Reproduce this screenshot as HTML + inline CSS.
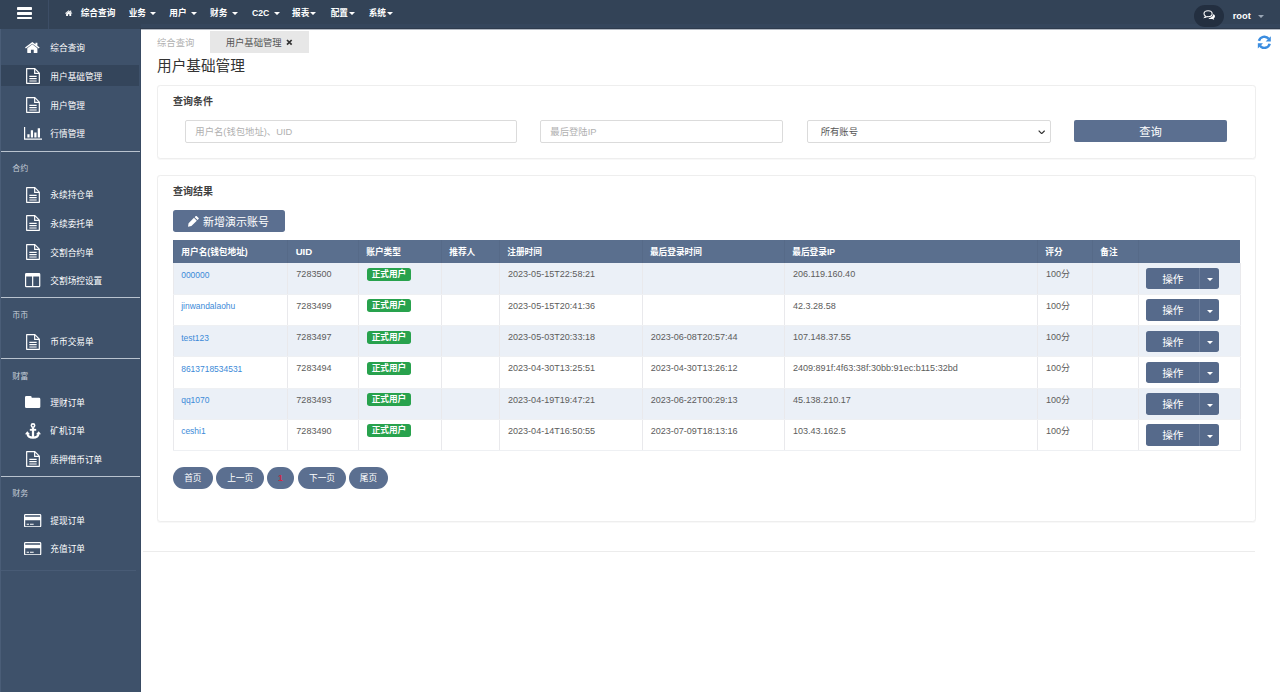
<!DOCTYPE html>
<html lang="zh-CN">
<head>
<meta charset="utf-8">
<title>用户基础管理</title>
<style>
*{box-sizing:border-box;}
html,body{margin:0;padding:0;background:#fff;overflow:hidden;}
body{width:1280px;height:692px;font-family:"Liberation Sans","Noto Sans CJK SC",sans-serif;}
#app{zoom:0.666667;width:1920px;height:1038px;position:relative;font-size:14px;color:#333;overflow:hidden;background:#fff;}
svg{display:block;}
#nav{position:absolute;left:0;top:0;width:1920px;height:43px;background:#334357;color:#fff;z-index:5;}
#edgeb{position:absolute;left:211px;top:36.500px;width:1709px;height:5.500px;background:#35465c;}
#edgeh{position:absolute;left:209.500px;top:42px;width:1711px;height:2.200px;background:#2e3b4d;z-index:6;}
#edgeh2{position:absolute;left:211.500px;top:43.500px;width:1709px;height:1.500px;background:#b4bac3;z-index:6;}
#edgev{position:absolute;left:209.500px;top:44px;width:1.800px;height:995px;background:#394b63;z-index:6;}
#burger{position:absolute;left:0;top:0;width:73px;height:43px;border-right:1px solid #3d4e66;}
#burger i{position:absolute;left:25px;width:23px;height:4px;background:#fff;border-radius:1px;}
.nitem{position:absolute;top:0;height:44px;line-height:39px;font-size:13px;font-weight:bold;white-space:nowrap;color:#fff;}
.caret{display:inline-block;vertical-align:middle;margin-left:6.500px;position:relative;top:-0.700px;}
.caret.t{margin-left:1.500px;}
.caret.r{margin-left:10.500px;width:9px;top:-0.500px;}
#side{position:absolute;left:0;top:43px;padding-top:1px;width:211px;height:995px;background:#3e516a;color:#fff;border-left:2px solid #4a5d77;}
.sitem{position:absolute;left:0;width:206.500px;height:32px;line-height:36.500px;font-size:13px;color:#fff;padding-left:74px;white-space:nowrap;}
.sitem.act{background:#34455b;}
.sitem svg{position:absolute;}
.slabel{position:absolute;left:17px;font-size:12px;color:#c6ced9;height:20px;line-height:20px;}
.ssep{position:absolute;left:0;width:209.500px;height:1.500px;background:#b9c3cf;}
#main{position:absolute;left:212px;top:44px;width:1708px;height:994px;background:#fff;}
.abs{position:absolute;white-space:nowrap;}
.panel{position:absolute;border:1px solid #eeeeee;border-radius:5px;background:#fff;box-shadow:0 1px 1px rgba(0,0,0,.03);}
.ptitle{position:absolute;font-size:15px;font-weight:bold;color:#404040;line-height:20px;}
.inp{position:absolute;height:34.800px;border:1px solid #dbdbdb;border-radius:3px;background:#fff;font-size:14px;line-height:34.500px;padding-left:14px;color:#b0b0b0;white-space:nowrap;}
.btn{position:absolute;background:#5b6f90;color:#fff;border-radius:4px;text-align:center;white-space:nowrap;}
table{border-collapse:collapse;position:absolute;table-layout:fixed;}
th{background:#5a6f8e;color:#fff;font-size:13px;font-weight:bold;text-align:left;padding:3.500px 0 0 11px;height:34.500px;line-height:31px;white-space:nowrap;border-left:1px solid #566a88;}
td{border-left:1px solid #e9e9ec;border-right:1px solid #e9e9ec;border-bottom:1px solid #eef0f3;vertical-align:top;padding:7px 0 0 12px;height:46.900px;font-size:13.600px;line-height:20px;color:#5c5c5c;white-space:nowrap;overflow:hidden;}
td div{height:20px;position:relative;top:0.700px;}
td div.l{top:1.500px;left:-1.200px;}
tr.odd td{background:#ebf0f7;}
td a{color:#3c8ad8;font-size:12.700px;text-decoration:none;}
.badge{display:block;width:66px;background:#28a24d;color:#fff;font-size:13px;font-weight:bold;height:19.500px;line-height:18.500px;text-align:center;border-radius:4px;margin-top:0px;}
.op{display:block;position:relative;width:109px;height:32px;margin-top:0px;margin-left:-1px;background:#566a8b;border-radius:4px;}
.op .a{position:absolute;left:0;top:0;width:81px;height:32px;color:#fff;font-size:16px;line-height:35px;text-align:center;border-right:1.500px solid #6b7d9b;}
.op .b{position:absolute;left:82px;top:0;width:27px;height:32px;}
.op .b svg{position:absolute;left:9px;top:15.500px;}
.pill{position:absolute;top:656.500px;height:33px;line-height:35px;border-radius:17px;background:#5b6f90;color:#fff;font-size:13px;text-align:center;}
</style>
</head>
<body>
<div id="app">
<div id="nav">
<div id="edgeb"></div><div id="burger"><i style="top:11px"></i><i style="top:18px"></i><i style="top:25px"></i></div>
<div class="nitem" style="left:98px"><svg width="11" height="10" viewBox="0 0 26 22" style="display:inline-block;vertical-align:-1px;margin-right:12px"><path fill="#fff" d="M13 4.500 4 12v8.500h6.500v-6h5v6H22V12zM13 0 0 10.800l1.600 1.900L13 3.200l11.400 9.500 1.600-1.900L22 7.500V1h-3.500v3.600z"/></svg>综合查询</div>
<div class="nitem" style="left:193px">业务<svg class="caret" width="9" height="5" viewBox="0 0 8 5" preserveAspectRatio="none"><path d="M0 0h8L4 4.600z" fill="#fff"/></svg></div>
<div class="nitem" style="left:254px">用户<svg class="caret" width="9" height="5" viewBox="0 0 8 5" preserveAspectRatio="none"><path d="M0 0h8L4 4.600z" fill="#fff"/></svg></div>
<div class="nitem" style="left:315px">财务<svg class="caret" width="9" height="5" viewBox="0 0 8 5" preserveAspectRatio="none"><path d="M0 0h8L4 4.600z" fill="#fff"/></svg></div>
<div class="nitem" style="left:378px">C2C<svg class="caret" width="9" height="5" viewBox="0 0 8 5" preserveAspectRatio="none"><path d="M0 0h8L4 4.600z" fill="#fff"/></svg></div>
<div class="nitem" style="left:438px">报表<svg class="caret t" width="9" height="5" viewBox="0 0 8 5" preserveAspectRatio="none"><path d="M0 0h8L4 4.600z" fill="#fff"/></svg></div>
<div class="nitem" style="left:496px">配置<svg class="caret t" width="9" height="5" viewBox="0 0 8 5" preserveAspectRatio="none"><path d="M0 0h8L4 4.600z" fill="#fff"/></svg></div>
<div class="nitem" style="left:553px">系统<svg class="caret t" width="9" height="5" viewBox="0 0 8 5" preserveAspectRatio="none"><path d="M0 0h8L4 4.600z" fill="#fff"/></svg></div>
<div class="abs" style="left:1791px;top:7px;width:45px;height:34px;border-radius:17px;background:#232f40"><svg width="19" height="16" viewBox="0 0 20 17" style="position:absolute;left:13px;top:8.500px"><path d="M8 1.200c3.600 0 6.500 2.100 6.500 4.800s-2.900 4.800-6.500 4.800c-.700 0-1.400-.1-2-.2-1 .8-2.300 1.300-3.500 1.400.7-.7 1.100-1.500 1.200-2.400C2.300 8.700 1.500 7.400 1.500 6c0-2.700 2.900-4.800 6.500-4.800z" fill="none" stroke="#fff" stroke-width="1.700"/><path d="M16.300 6.500c1.700.8 2.700 2.100 2.700 3.600 0 1.300-.800 2.500-2.100 3.300.1.800.5 1.600 1.100 2.200-1.200-.1-2.300-.6-3.200-1.300-.6.1-1.200.2-1.800.2-1.800 0-3.400-.6-4.500-1.500 4.500-.2 8-2.900 7.800-6.500z" fill="#fff"/></svg></div>
<div class="nitem" style="left:1849px;font-size:14px;line-height:50px">root<svg class="caret r" width="9" height="5" viewBox="0 0 8 5" preserveAspectRatio="none"><path d="M0 0h8L4 4.600z" fill="#9aa6b5"/></svg></div>
</div>
<div id="edgeh"></div><div id="edgeh2"></div><div id="edgev"></div>
<div id="side">
<div class="sitem" style="top:11.5px"><svg style="left:36.5px;top:8.5px" width="22" height="17" viewBox="0 0 26 22" preserveAspectRatio="none"><path fill="#fff" d="M13 4.500 4 12v8.500q0 1 1 1h5.500v-6.500h5v6.500H21q1 0 1-1V12zM13 0 0 10.800l1.600 1.900L13 3.200l11.400 9.500 1.600-1.900L22 7.500V1.500h-3.500v3.100z"/></svg>综合查询</div>
<div class="sitem act" style="top:54.5px"><svg style="left:37.5px;top:5.0px" width="21" height="24" viewBox="0 0 21 24"><path d="M1 1h12.300l6.700 6.700V23H1z" fill="none" stroke="#fff" stroke-width="1.800" stroke-linejoin="round"/><path d="M13 1.500V8h6.500" fill="none" stroke="#fff" stroke-width="1.800"/><path d="M5 12.500h11M5 16h11M5 19.500h11" stroke="#fff" stroke-width="1.700"/></svg>用户基础管理</div>
<div class="sitem" style="top:97.5px"><svg style="left:37.5px;top:5.0px" width="21" height="24" viewBox="0 0 21 24"><path d="M1 1h12.300l6.700 6.700V23H1z" fill="none" stroke="#fff" stroke-width="1.800" stroke-linejoin="round"/><path d="M13 1.500V8h6.500" fill="none" stroke="#fff" stroke-width="1.800"/><path d="M5 12.500h11M5 16h11M5 19.500h11" stroke="#fff" stroke-width="1.700"/></svg>用户管理</div>
<div class="sitem" style="top:140.5px"><svg style="left:34.5px;top:7.0px" width="27" height="19" viewBox="0 0 27 21" preserveAspectRatio="none"><path fill="#fff" d="M0 0h1.800v19.200H27V21H0zM5 12h3.400v5.500H5zM10.200 5.500h3.400v12h-3.400zM15.400 9h3.400v8.500h-3.400zM20.600 2h3.400v15.500h-3.400z"/></svg>行情管理</div>
<div class="ssep" style="top:182.8px"></div>
<div class="slabel" style="top:200.0px">合约</div>
<div class="sitem" style="top:232.0px"><svg style="left:37.5px;top:5.0px" width="21" height="24" viewBox="0 0 21 24"><path d="M1 1h12.300l6.700 6.700V23H1z" fill="none" stroke="#fff" stroke-width="1.800" stroke-linejoin="round"/><path d="M13 1.500V8h6.500" fill="none" stroke="#fff" stroke-width="1.800"/><path d="M5 12.500h11M5 16h11M5 19.500h11" stroke="#fff" stroke-width="1.700"/></svg>永续持仓单</div>
<div class="sitem" style="top:275.0px"><svg style="left:37.5px;top:5.0px" width="21" height="24" viewBox="0 0 21 24"><path d="M1 1h12.300l6.700 6.700V23H1z" fill="none" stroke="#fff" stroke-width="1.800" stroke-linejoin="round"/><path d="M13 1.500V8h6.500" fill="none" stroke="#fff" stroke-width="1.800"/><path d="M5 12.500h11M5 16h11M5 19.500h11" stroke="#fff" stroke-width="1.700"/></svg>永续委托单</div>
<div class="sitem" style="top:318.0px"><svg style="left:37.5px;top:5.0px" width="21" height="24" viewBox="0 0 21 24"><path d="M1 1h12.300l6.700 6.700V23H1z" fill="none" stroke="#fff" stroke-width="1.800" stroke-linejoin="round"/><path d="M13 1.500V8h6.500" fill="none" stroke="#fff" stroke-width="1.800"/><path d="M5 12.500h11M5 16h11M5 19.500h11" stroke="#fff" stroke-width="1.700"/></svg>交割合约单</div>
<div class="sitem" style="top:361.0px"><svg style="left:36.5px;top:5.8px" width="23" height="21.500" viewBox="0 0 23 20" preserveAspectRatio="none"><path fill="#fff" fill-rule="evenodd" d="M2 0h19q2 0 2 2v16q0 2-2 2H2q-2 0-2-2V2q0-2 2-2zM1.800 5v13q0 .3.300.3h8.500V5zM12.400 5v13.300h8.500q.3 0 .3-.3V5z"/></svg>交割场控设置</div>
<div class="ssep" style="top:402.4px"></div>
<div class="slabel" style="top:420.5px">币币</div>
<div class="sitem" style="top:452.5px"><svg style="left:37.5px;top:5.0px" width="21" height="24" viewBox="0 0 21 24"><path d="M1 1h12.300l6.700 6.700V23H1z" fill="none" stroke="#fff" stroke-width="1.800" stroke-linejoin="round"/><path d="M13 1.500V8h6.500" fill="none" stroke="#fff" stroke-width="1.800"/><path d="M5 12.500h11M5 16h11M5 19.500h11" stroke="#fff" stroke-width="1.700"/></svg>币币交易单</div>
<div class="ssep" style="top:493.9px"></div>
<div class="slabel" style="top:512.0px">财富</div>
<div class="sitem" style="top:543.0px"><svg style="left:36.5px;top:8.0px" width="23" height="18" viewBox="0 0 23 18"><path fill="#fff" d="M2 0h6q2 0 2 2v.800h11q2 0 2 2V16q0 2-2 2H2q-2 0-2-2V2q0-2 2-2z"/></svg>理财订单</div>
<div class="sitem" style="top:586.0px"><svg style="left:36.0px;top:5.0px" width="24" height="24" viewBox="0 0 24 24"><g fill="none" stroke="#fff"><circle cx="12" cy="3.800" r="2.500" stroke-width="2.400"/><path d="M12 6.500V21.500" stroke-width="3.400"/><path d="M7.200 10.200h9.600" stroke-width="2.800"/><path d="M3.600 15.500c.4 4.200 4 6.400 8.400 6.400s8-2.200 8.400-6.400" stroke-width="3.200"/></g><path fill="#fff" d="M-.2 17 3.400 12.200 7.600 17zM16.400 17l4.200-4.800 3.600 4.800z"/></svg>矿机订单</div>
<div class="sitem" style="top:629.0px"><svg style="left:37.5px;top:5.0px" width="21" height="24" viewBox="0 0 21 24"><path d="M1 1h12.300l6.700 6.700V23H1z" fill="none" stroke="#fff" stroke-width="1.800" stroke-linejoin="round"/><path d="M13 1.500V8h6.500" fill="none" stroke="#fff" stroke-width="1.800"/><path d="M5 12.500h11M5 16h11M5 19.500h11" stroke="#fff" stroke-width="1.700"/></svg>质押借币订单</div>
<div class="ssep" style="top:670.9px"></div>
<div class="slabel" style="top:688.0px">财务</div>
<div class="sitem" style="top:721.0px"><svg style="left:35.0px;top:7.0px" width="26" height="20" viewBox="0 0 26 20"><path fill="#fff" fill-rule="evenodd" d="M2.200 0h21.600q2.200 0 2.200 2.200v15.600q0 2.200-2.200 2.200H2.200Q0 20 0 17.800V2.200Q0 0 2.200 0zM1.800 2.200V4h22.400V2.200q0-.4-.4-.4H2.200q-.4 0-.4.400zM1.800 9.500v8.300q0 .4.400.4h21.600q.4 0 .4-.4V9.500zM4 14.500h3.500v1.800H4zM9 14.500h5.500v1.800H9z"/></svg>提现订单</div>
<div class="sitem" style="top:763.0px"><svg style="left:35.0px;top:7.0px" width="26" height="20" viewBox="0 0 26 20"><path fill="#fff" fill-rule="evenodd" d="M2.200 0h21.600q2.200 0 2.200 2.200v15.600q0 2.200-2.200 2.200H2.200Q0 20 0 17.800V2.200Q0 0 2.200 0zM1.800 2.200V4h22.400V2.200q0-.4-.4-.4H2.200q-.4 0-.4.400zM1.800 9.500v8.300q0 .4.400.4h21.600q.4 0 .4-.4V9.500zM4 14.500h3.500v1.800H4zM9 14.500h5.500v1.800H9z"/></svg>充值订单</div>
<div class="abs" style="left:0;top:812.5px;width:203px;height:1px;background:#485b75"></div>
</div>
<div id="main">
<div class="abs" style="left:23.5px;top:2.0px;font-size:14px;color:#b0b0b0;line-height:36px">综合查询</div>
<div class="abs" style="left:103.0px;top:2.0px;width:148px;height:33.500px;background:#e7e7e7;font-size:14px;color:#555;line-height:36px;padding-left:23.500px">用户基础管理<svg width="10" height="10" viewBox="0 0 10 10" style="position:absolute;left:114.500px;top:13px"><path d="M1.500 1.500l7 7M8.500 1.500l-7 7" stroke="#333" stroke-width="2.600"/></svg></div>
<svg class="abs" style="left:1673.5px;top:8.0px;transform:scaleX(-1)" width="22" height="22" viewBox="0 0 21 21"><g fill="none" stroke="#3b8de0" stroke-width="3.600"><path d="M18.200 8.500A8 8 0 0 0 4.200 5.500"/><path d="M2.800 12.500A8 8 0 0 0 16.800 15.500"/></g><path fill="#3b8de0" d="M1.200 1.800v7.400h7.400zM19.800 19.200v-7.400h-7.400z"/></svg>
<div class="abs" style="left:23.5px;top:40.7px;font-size:22px;color:#333;line-height:30px">用户基础管理</div>
<div class="panel" style="left:24.0px;top:83.5px;width:1648.0px;height:111.0px"></div>
<div class="ptitle" style="left:47.5px;top:99.0px">查询条件</div>
<div class="inp" style="left:65.5px;top:135.5px;width:498.3px">用户名(钱包地址)、UID</div>
<div class="inp" style="left:598.0px;top:135.5px;width:364.8px">最后登陆IP</div>
<div class="inp" style="left:998.5px;top:135.5px;width:366.3px;color:#555;padding-left:19px">所有账号<svg width="11" height="7" viewBox="0 0 11 7" style="position:absolute;right:7.500px;top:13.500px"><path d="M1 1l4.500 4.500L10 1" fill="none" stroke="#333" stroke-width="1.800"/></svg></div>
<div class="btn" style="left:1399.0px;top:136.0px;width:229.5px;height:33px;line-height:37px;font-size:17px;border-radius:3px">查询</div>
<div class="panel" style="left:24.0px;top:218.5px;width:1648.0px;height:520.5px"></div>
<div class="ptitle" style="left:47.5px;top:233.0px">查询结果</div>
<div class="btn" style="left:47.5px;top:270.5px;width:168.0px;height:34px;line-height:36px;font-size:16.500px;text-align:left;padding-left:45px">新增演示账号<svg width="16" height="16" viewBox="0 0 15 15" style="position:absolute;left:23px;top:10px"><path fill="#fff" d="M0 15l.8-4.800 7.600-7.600 4 4-7.600 7.600zM9.400 1.600 10.900.1q.6-.6 1.200 0l2.800 2.800q.6.600 0 1.200l-1.500 1.500z"/></svg></div>
<table style="left:47.5px;top:316.0px;width:1600.5px"><colgroup><col style="width:171.5px"><col style="width:106.0px"><col style="width:124.5px"><col style="width:87.0px"><col style="width:214.0px"><col style="width:213.5px"><col style="width:379.5px"><col style="width:82.5px"><col style="width:69.0px"><col style="width:153.0px"></colgroup>
<tr><th>用户名(钱包地址)</th><th><span style="font-size:14.500px">UID</span></th><th>账户类型</th><th>推荐人</th><th>注册时间</th><th>最后登录时间</th><th>最后登录IP</th><th>评分</th><th>备注</th><th></th></tr>
<tr class="odd"><td><div class="l"><a>000000</a></div></td><td><div>7283500</div></td><td><span class="badge">正式用户</span></td><td></td><td><div>2023-05-15T22:58:21</div></td><td><div></div></td><td><div>206.119.160.40</div></td><td><div>100分</div></td><td></td><td><span class="op"><span class="a">操作</span><span class="b"><svg width="9" height="5" viewBox="0 0 8 5" preserveAspectRatio="none"><path d="M0 0h8L4 4.600z" fill="#fff"/></svg></span></span></td></tr>
<tr class="even"><td><div class="l"><a>jinwandalaohu</a></div></td><td><div>7283499</div></td><td><span class="badge">正式用户</span></td><td></td><td><div>2023-05-15T20:41:36</div></td><td><div></div></td><td><div>42.3.28.58</div></td><td><div>100分</div></td><td></td><td><span class="op"><span class="a">操作</span><span class="b"><svg width="9" height="5" viewBox="0 0 8 5" preserveAspectRatio="none"><path d="M0 0h8L4 4.600z" fill="#fff"/></svg></span></span></td></tr>
<tr class="odd"><td><div class="l"><a>test123</a></div></td><td><div>7283497</div></td><td><span class="badge">正式用户</span></td><td></td><td><div>2023-05-03T20:33:18</div></td><td><div>2023-06-08T20:57:44</div></td><td><div>107.148.37.55</div></td><td><div>100分</div></td><td></td><td><span class="op"><span class="a">操作</span><span class="b"><svg width="9" height="5" viewBox="0 0 8 5" preserveAspectRatio="none"><path d="M0 0h8L4 4.600z" fill="#fff"/></svg></span></span></td></tr>
<tr class="even"><td><div class="l"><a>8613718534531</a></div></td><td><div>7283494</div></td><td><span class="badge">正式用户</span></td><td></td><td><div>2023-04-30T13:25:51</div></td><td><div>2023-04-30T13:26:12</div></td><td><div>2409:891f:4f63:38f:30bb:91ec:b115:32bd</div></td><td><div>100分</div></td><td></td><td><span class="op"><span class="a">操作</span><span class="b"><svg width="9" height="5" viewBox="0 0 8 5" preserveAspectRatio="none"><path d="M0 0h8L4 4.600z" fill="#fff"/></svg></span></span></td></tr>
<tr class="odd"><td><div class="l"><a>qq1070</a></div></td><td><div>7283493</div></td><td><span class="badge">正式用户</span></td><td></td><td><div>2023-04-19T19:47:21</div></td><td><div>2023-06-22T00:29:13</div></td><td><div>45.138.210.17</div></td><td><div>100分</div></td><td></td><td><span class="op"><span class="a">操作</span><span class="b"><svg width="9" height="5" viewBox="0 0 8 5" preserveAspectRatio="none"><path d="M0 0h8L4 4.600z" fill="#fff"/></svg></span></span></td></tr>
<tr class="even"><td><div class="l"><a>ceshi1</a></div></td><td><div>7283490</div></td><td><span class="badge">正式用户</span></td><td></td><td><div>2023-04-14T16:50:55</div></td><td><div>2023-07-09T18:13:16</div></td><td><div>103.43.162.5</div></td><td><div>100分</div></td><td></td><td><span class="op"><span class="a">操作</span><span class="b"><svg width="9" height="5" viewBox="0 0 8 5" preserveAspectRatio="none"><path d="M0 0h8L4 4.600z" fill="#fff"/></svg></span></span></td></tr>
</table>
<div class="pill" style="left:47.5px;width:59.5px;color:#fff">首页</div>
<div class="pill" style="left:112.0px;width:72.5px;color:#fff">上一页</div>
<div class="pill" style="left:188.5px;width:40.5px;color:#cf2743"><b>1</b></div>
<div class="pill" style="left:235.0px;width:72.0px;color:#fff">下一页</div>
<div class="pill" style="left:311.5px;width:58.5px;color:#fff">尾页</div>
<div class="abs" style="left:3px;top:782.0px;width:1668.0px;height:1.500px;background:#ececec"></div>
</div>
</div>
</body>
</html>
